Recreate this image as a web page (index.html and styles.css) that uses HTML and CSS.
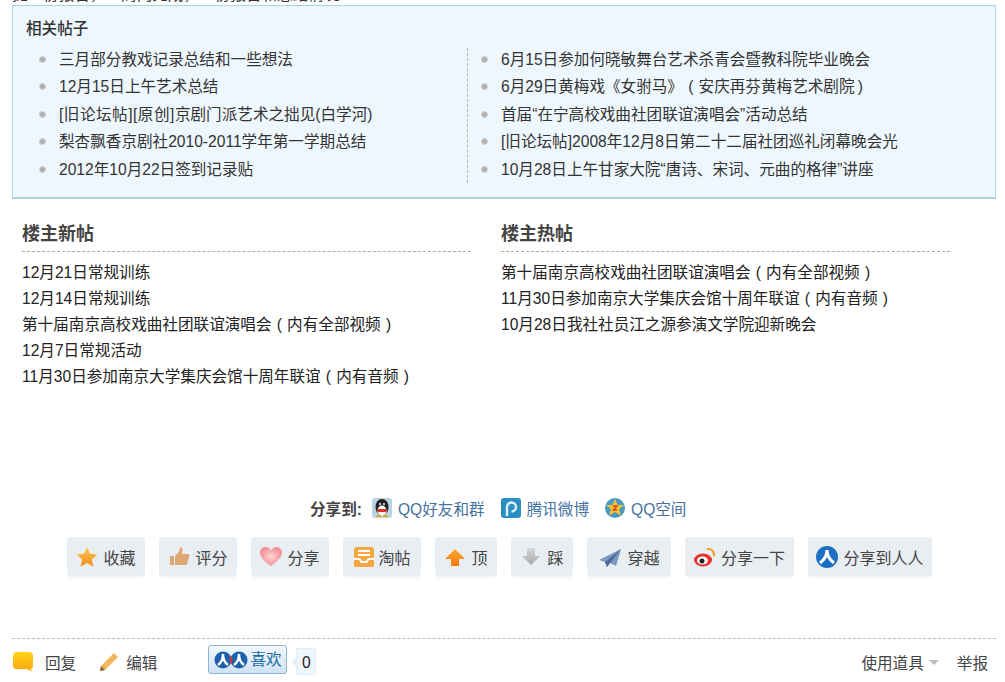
FILE: index.html
```html
<!DOCTYPE html>
<html lang="zh">
<head>
<meta charset="utf-8">
<title>相关帖子</title>
<link rel="stylesheet" href="styles.css">
</head>
<body>
<div class="page">
  <div class="clip"><p class="clip-text">提一份报告，一周内完成，一份报告和总结情况</p></div>
  <section class="related">
    <h3 class="related-title">相关帖子</h3>
    <div class="related-cols">
      <ul class="dots left">
        <li>三月部分教戏记录总结和一些想法</li>
        <li>12月15日上午艺术总结</li>
        <li><span class="wide">[旧论坛帖][原创]</span>京剧门派艺术之拙见(白学河)</li>
        <li>梨杏飘香京剧社2010-2011学年第一学期总结</li>
        <li>2012年10月22日签到记录贴</li>
      </ul>
      <ul class="dots right">
        <li>6月15日参加何晓敏舞台艺术杀青会暨教科院毕业晚会</li>
        <li>6月29日黄梅戏《女驸马》<span class="paren">(</span>安庆再芬黄梅艺术剧院<span class="paren narrow">)</span></li>
        <li>首届“在宁高校戏曲社团联谊演唱会”活动总结</li>
        <li>[旧论坛帖]2008年12月8日第二十二届社团巡礼闭幕晚会光</li>
        <li>10月28日上午甘家大院“唐诗、宋词、元曲的格律”讲座</li>
      </ul>
    </div>
  </section>
  <section class="owner">
    <div class="owner-col">
      <h3 class="owner-title">楼主新帖</h3>
      <ul class="plain">
        <li>12月21日常规训练</li>
        <li>12月14日常规训练</li>
        <li>第十届南京高校戏曲社团联谊演唱会<span class="paren">(</span>内有全部视频<span class="paren">)</span></li>
        <li>12月7日常规活动</li>
        <li>11月30日参加南京大学集庆会馆十周年联谊<span class="paren">(</span>内有音频<span class="paren">)</span></li>
      </ul>
    </div>
    <div class="owner-col">
      <h3 class="owner-title">楼主热帖</h3>
      <ul class="plain">
        <li>第十届南京高校戏曲社团联谊演唱会<span class="paren">(</span>内有全部视频<span class="paren">)</span></li>
        <li>11月30日参加南京大学集庆会馆十周年联谊<span class="paren">(</span>内有音频<span class="paren">)</span></li>
        <li>10月28日我社社员江之源参演文学院迎新晚会</li>
      </ul>
    </div>
  </section>
  <div class="share">
    <b class="share-label">分享到:</b>
    <a class="share-link">
      <svg class="i20" viewBox="0 0 20 20"><rect width="20" height="20" rx="3" fill="#b9d3e2"/><ellipse cx="10" cy="9" rx="6.500" ry="8" fill="#222"/><ellipse cx="10" cy="12.500" rx="4.500" ry="5" fill="#fff"/><path d="M5 11h10l-1 3H6z" fill="#d8322a"/><circle cx="8" cy="6" r="1" fill="#fff"/><circle cx="12" cy="6" r="1" fill="#fff"/><path d="M5 17h4v2H4zM11 17h4l1 2h-5z" fill="#f0a020"/></svg>
      QQ好友和群</a>
    <a class="share-link">
      <svg class="i20" viewBox="0 0 20 20"><rect width="20" height="20" rx="3" fill="#2b8fc4"/><path d="M6 18V9a4.500 4.500 0 1 1 4.500 4.500" fill="none" stroke="#dff2fb" stroke-width="2.400"/></svg>
      腾讯微博</a>
    <a class="share-link">
      <svg class="i20" viewBox="0 0 20 20"><circle cx="10" cy="10" r="10" fill="#4b9ac4"/><path d="M10 1l2.700 6h6.300l-5 4.200 1.900 6.600L10 14l-5.900 3.800 1.900-6.600L1 7h6.300z" fill="#f5c52e"/><path d="M8 8h4l-3.500 4H12" fill="none" stroke="#d8402a" stroke-width="1.400"/></svg>
      QQ空间</a>
  </div>
  <div class="actions">
    <a class="act w78">
      <svg class="i22" viewBox="0 0 22 22"><defs><linearGradient id="st" x1="0" y1="0" x2="0" y2="1"><stop offset="0" stop-color="#fbc94a"/><stop offset="1" stop-color="#f58a24"/></linearGradient></defs><path d="M11 1l3 6.800 7.400.7-5.600 5 1.700 7.300L11 16.900l-6.500 3.900 1.700-7.300-5.600-5 7.400-.7z" fill="url(#st)"/></svg>
      <span>收藏</span></a>
    <a class="act w78">
      <svg class="i22" viewBox="0 0 22 22"><path d="M2 10h4v9H2zM7 10l4-4 1-5c3 0 3 3 2 7h6c1 0 2 1 1 3l-2 7c-.3 1-1 1-2 1H7z" fill="#dca873"/></svg>
      <span>评分</span></a>
    <a class="act w78">
      <svg class="i22" viewBox="0 0 22 22"><defs><radialGradient id="ht"><stop offset="0" stop-color="#fdd3d3"/><stop offset="1" stop-color="#f68f98"/></radialGradient></defs><path d="M11 20C4 15 0 11 0 6.500 0 3 3 1 5.500 1 8 1 10 2.500 11 4.500 12 2.500 14 1 16.500 1 19 1 22 3 22 6.500 22 11 18 15 11 20z" fill="url(#ht)"/></svg>
      <span>分享</span></a>
    <a class="act w78 tight">
      <svg class="i22" viewBox="0 0 22 22"><path d="M3 1h16l2 2v17l-1 1H2l-1-1V3z" fill="#f5a742"/><path d="M5 4h12v2H5zM5 8h12v2H5z" fill="#fff"/><path d="M1 12h6l2 3h4l2-3h6v2h-5l-2 3H8l-2-3H1z" fill="#fff"/></svg>
      <span>淘帖</span></a>
    <a class="act w62">
      <svg class="i22" viewBox="0 0 22 22"><defs><linearGradient id="up" x1="0" y1="0" x2="0" y2="1"><stop offset="0" stop-color="#fba92e"/><stop offset="1" stop-color="#f7780c"/></linearGradient></defs><path d="M11 3l10 10h-6v7H7v-7H1z" fill="url(#up)"/></svg>
      <span>顶</span></a>
    <a class="act w62">
      <svg class="i22" viewBox="0 0 22 22"><defs><linearGradient id="dn" x1="0" y1="0" x2="0" y2="1"><stop offset="0" stop-color="#d6d6d6"/><stop offset="1" stop-color="#a8a8a8"/></linearGradient></defs><path d="M7 2h8v8h5L11 19 2 10h5z" fill="url(#dn)"/></svg>
      <span>踩</span></a>
    <a class="act w84">
      <svg class="i24" viewBox="0 0 24 22"><path d="M23 3L1 14l6 2 2 5 3-4 6 3z" fill="#7c98bd"/><path d="M23 3L7 16l2 5z" fill="#4e6d96"/></svg>
      <span>穿越</span></a>
    <a class="act w109">
      <svg class="i22" viewBox="0 0 22 22"><ellipse cx="9" cy="14" rx="9" ry="6.500" fill="#e6322d"/><ellipse cx="8.500" cy="14.500" rx="5.500" ry="4" fill="#fff"/><circle cx="8" cy="15" r="2.500" fill="#222"/><path d="M13 3a6 6 0 0 1 7 7" fill="none" stroke="#f59a1e" stroke-width="2"/></svg>
      <span>分享一下</span></a>
    <a class="act w124">
      <svg class="i22" viewBox="0 0 22 22"><circle cx="11" cy="11" r="11" fill="#1d6fc2"/><path d="M11 4c0 5-3 10-7 13M11 4c0 5 3 10 7 13" fill="none" stroke="#fff" stroke-width="3"/></svg>
      <span>分享到人人</span></a>
  </div>
  <footer class="foot">
    <a class="foot-link">
      <svg class="i22" viewBox="0 0 22 22"><defs><linearGradient id="bb" x1="0" y1="0" x2="0" y2="1"><stop offset="0" stop-color="#ffd21a"/><stop offset="1" stop-color="#f7a80a"/></linearGradient></defs><path d="M5 1h12c3 0 4 2 4 4v9c0 3-1 4-3 4l3 3-7-3H5c-3 0-4-1-4-4V5c0-2 1-4 4-4z" fill="url(#bb)"/></svg>
      <span>回复</span></a>
    <a class="foot-link">
      <svg class="i20" viewBox="0 0 20 20"><path d="M15 1l4 4L6 18l-5 1 1-5z" fill="#f2b65c"/><path d="M2 14l4 4-5 1z" fill="#8a6a44"/></svg>
      <span>编辑</span></a>
    <a class="like">
      <svg class="like-ico" viewBox="0 0 34 18"><circle cx="9" cy="9" r="8.500" fill="#1e62ae"/><circle cx="25" cy="9" r="8.500" fill="#1e62ae"/><path d="M9 3c0 5-2 9-5 11M9 3c0 5 2 9 5 11M25 3c0 5-2 9-5 11M25 3c0 5 2 9 5 11" fill="none" stroke="#fff" stroke-width="2.400"/><path d="M17 4l1.500 5L17 14l-1.500-5z" fill="#d8392b"/></svg>
      <span>喜欢</span></a>
    <span class="count">0</span>
    <span class="foot-spacer"></span>
    <a class="tools">使用道具<i class="caret"></i></a>
    <a class="report">举报</a>
  </footer>
</div>
</body>
</html>
```

FILE: styles.css
```css
html, body { margin: 0; padding: 0; background: #fff; height: 682px; overflow: hidden; }
body { font-family: "Liberation Sans", "Noto Sans CJK SC", sans-serif; color: #333; font-size: 15.600px; }
ul { list-style: none; margin: 0; padding: 0; }
h3, p { margin: 0; }
.paren { display: inline-block; width: 1em; text-align: center; }
.narrow { width: 0.75em; }
.wide { letter-spacing: 0.5px; }
.page { padding: 0 9px 0 12px; }
.clip { height: 5px; overflow: hidden; }
.clip-text { margin-top: -15px; line-height: 20px; }
.related { height: 194px; box-sizing: border-box; border: 1px solid #a9d5dc; border-bottom-width: 2px; background: #eef7fd; padding: 10px 13px 0; }
.related-title { font-size: 15.600px; font-weight: 500; line-height: 26px; color: #333; }
.related-cols { display: flex; margin-top: 6px; }
.dots { height: 135px; box-sizing: border-box; }
.left { width: 441px; padding-left: 12px; }
.right { flex: 1; padding-left: 12px; border-left: 1px dashed #b4b4b4; }
.dots li { position: relative; height: 27.400px; line-height: 23px; padding-left: 21px; white-space: nowrap; }
.dots li::before { content: ""; position: absolute; left: 1px; top: 8px; width: 5px; height: 5px; border: 1px solid #d0d0d0; background: #b0b0b0; border-radius: 50%; }
.owner { display: flex; margin-top: 21px; padding-left: 10px; }
.owner-col { width: 449px; margin-right: 30px; }
.owner-title { font-size: 18px; font-weight: 700; line-height: 28px; color: #444; padding-bottom: 3px; border-bottom: 1px dashed #aaa; }
.plain { margin-top: 8px; }
.plain li { height: 26px; line-height: 26px; white-space: nowrap; color: #222; }
.share { display: flex; align-items: center; margin-top: 106px; padding-left: 298px; height: 24px; color: #45729f; }
.share-label { color: #444; margin-right: 10px; }
.share-link { display: flex; align-items: center; gap: 6px; margin-right: 16px; }
.i20 { width: 20px; height: 20px; flex: none; }
.i22 { width: 22px; height: 22px; flex: none; }
.i24 { width: 24px; height: 22px; flex: none; }
.actions { display: flex; gap: 14px; margin-top: 17px; padding-left: 55px; }
.act { display: flex; align-items: center; justify-content: center; gap: 5px; box-sizing: border-box; height: 39px; background: #e9eef3; border-radius: 3px; box-shadow: 0 3px 0 -1px #f6f6f6; color: #444; white-space: nowrap; font-size: 16px; }
.tight { gap: 3px; }
.w78 { width: 78px; }
.w62 { width: 62px; }
.w84 { width: 84px; }
.w109 { width: 109px; }
.w124 { width: 124px; }
.foot { display: flex; align-items: center; margin-top: 62px; height: 46px; border-top: 1px dashed #bbb; color: #444; }
.foot-link { display: flex; align-items: center; gap: 11px; margin-right: 23px; }
.foot-link:nth-child(2) { gap: 7px; margin-right: 51px; }
.like { display: flex; align-items: center; gap: 2px; box-sizing: border-box; height: 29px; width: 79px; margin-top: -5px; padding-left: 5px; border: 1px solid #8db4d3; border-radius: 3px; background: linear-gradient(#f2f8fd, #cfe3f4); color: #1c6ca8; }
.like span { margin-top: -3px; }
.like-ico { width: 34px; height: 18px; flex: none; }
.count { position: relative; margin-left: 9px; margin-top: -2px; height: 27px; width: 20px; line-height: 27px; text-align: center; background: #f0f7fc; border: 1px solid #e3eef6; box-sizing: border-box; color: #222; }
.count::before { content: ""; position: absolute; left: -6px; top: 8px; width: 0; height: 0; border: 5px solid transparent; border-left: 0; border-right: 6px solid #e3eef6; }
.foot-spacer { flex: 1; }
.tools { display: flex; align-items: center; }
.caret { width: 0; height: 0; margin-left: 5px; border: 5px solid transparent; border-top: 5px solid #bbb; border-bottom: 0; }
.report { margin-left: 18px; margin-right: 8px; }
```
